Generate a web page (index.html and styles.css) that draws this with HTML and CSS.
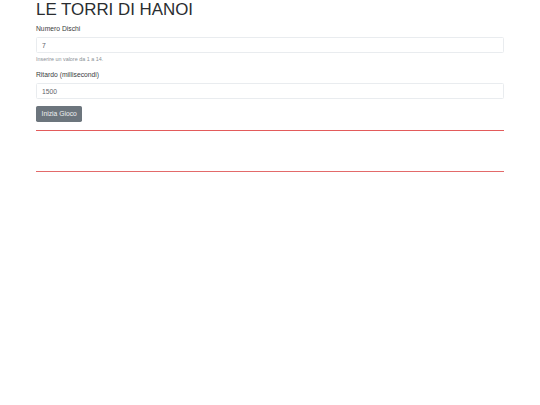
FILE: index.html
```html
<!DOCTYPE html>
<html lang="it">
<head>
  <meta charset="UTF-8" />
  <title>Le Torri di Hanoi</title>
  <link rel="stylesheet" href="styles.css">
</head>
<body>
  <div class="container">
    <h1>LE TORRI DI HANOI</h1>

    <div class="form-group">
      <label for="dischi">Numero Dischi</label>
      <input class="form-control" id="dischi" type="text" value="7">
      <small class="form-text">Inserire un valore da 1 a 14.</small>
    </div>

    <div class="form-group">
      <label for="ritardo">Ritardo (millisecondi)</label>
      <input class="form-control" id="ritardo" type="text" value="1500">
    </div>

    <button class="btn">Inizia Gioco</button>

    <div class="board"></div>
  </div>
</body>
</html>
```

FILE: styles.css
```css
* {
  box-sizing: border-box;
}

body {
  margin: 0;
  font-family: "Liberation Sans", Arial, sans-serif;
  font-size: 6.75px;
  line-height: 1.5;
  color: #3a3d40;
  background: #fff;
}

.container {
  width: 481px;
  margin: 0 auto;
  padding: 0 6.5px;
}

h1 {
  margin: 0 0 3.4px;
  font-size: 16.9px;
  font-weight: 400;
  line-height: 1.2;
  color: #2a2d30;
}

.form-group {
  margin-bottom: 6.75px;
}

label {
  display: inline-block;
  margin-bottom: 3.4px;
}

.form-control {
  display: block;
  width: 100%;
  height: 16px;
  padding: 2.5px 5px;
  font-family: inherit;
  font-size: 6.75px;
  line-height: 1.5;
  color: #5f656b;
  background: #fff;
  border: 1px solid #e9ecef;
  border-radius: 1.5px;
  outline: none;
}

.form-text {
  display: block;
  margin-top: 1.7px;
  font-size: 5.4px;
  color: #8a9096;
}

.btn {
  display: inline-block;
  height: 16px;
  padding: 0 5.5px;
  font-family: inherit;
  font-size: 6.75px;
  line-height: 1.5;
  color: #eef0f2;
  background: #6c757d;
  border: none;
  border-radius: 1.7px;
}

.board {
  margin-top: 8px;
  height: 42px;
  border-top: 1px solid #e35b5b;
  border-bottom: 1px solid #e36a6a;
}
```
